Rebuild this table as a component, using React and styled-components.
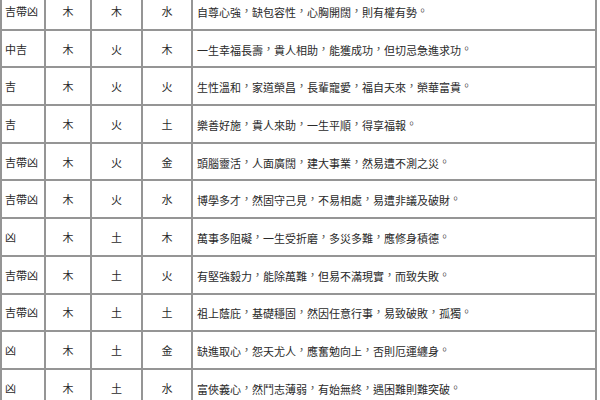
import React from 'react';
import styled, { createGlobalStyle } from 'styled-components';

const GlobalStyle = createGlobalStyle`
  html, body {
    margin: 0;
    padding: 0;
    background: #ffffff;
  }
  body {
    font-family: "Noto Sans CJK TC", "Noto Sans CJK SC", sans-serif;
  }
`;

const Frame = styled.div`
  width: 600px;
  height: 400px;
  overflow: hidden;
  background: #fff;
`;

const Table = styled.table`
  margin-top: -9px;
  margin-left: 0;
  width: 597px;
  border-collapse: collapse;
  table-layout: fixed;
  border: 2px solid #959595;
`;

const Row = styled.tr`
  height: 37.7px;
`;

const Cell = styled.td`
  border: 2px solid #959595;
  padding: 0 ${p => (p.$wide ? '4px' : '3px')};
  font-size: 11px;
  line-height: 14px;
  color: #2a2a2a;
  text-align: ${p => (p.$center ? 'center' : 'left')};
  vertical-align: middle;
  white-space: nowrap;
  overflow: hidden;
`;

// punctuation gets a full cell of its own, as in Taiwanese typesetting
const Punct = styled.span`
  display: inline-block;
  width: 11px;
  text-align: center;
  vertical-align: 2px;
  color: #555;
`;

const rows = [
  ['吉帶凶', '木', '木', '水', '自尊心強，缺包容性，心胸開闊，則有權有勢。'],
  ['中吉', '木', '火', '木', '一生幸福長壽，貴人相助，能獲成功，但切忌急進求功。'],
  ['吉', '木', '火', '火', '生性溫和，家道榮昌，長輩寵愛，福自天來，榮華富貴。'],
  ['吉', '木', '火', '土', '樂善好施，貴人來助，一生平順，得享福報。'],
  ['吉帶凶', '木', '火', '金', '頭腦靈活，人面廣闊，建大事業，然易遭不測之災。'],
  ['吉帶凶', '木', '火', '水', '博學多才，然固守己見，不易相處，易遭非議及破財。'],
  ['凶', '木', '土', '木', '萬事多阻礙，一生受折磨，多災多難，應修身積德。'],
  ['吉帶凶', '木', '土', '火', '有堅強毅力，能除萬難，但易不滿現實，而致失敗。'],
  ['吉帶凶', '木', '土', '土', '祖上蔭庇，基礎穩固，然因任意行事，易致破敗，孤獨。'],
  ['凶', '木', '土', '金', '缺進取心，怨天尤人，應奮勉向上，否則厄運纏身。'],
  ['凶', '木', '土', '水', '富俠義心，然鬥志薄弱，有始無終，遇困難則難突破。'],
];

const widths = [44, 46, 51, 50, null];

const Sentence = ({ text }) =>
  text.split(/([，。])/).filter(Boolean).map((part, i) =>
    part === '，' || part === '。'
      ? <Punct key={i}>{part}</Punct>
      : <React.Fragment key={i}>{part}</React.Fragment>
  );

export default function App() {
  return (
    <>
      <GlobalStyle />
      <Frame lang="zh-Hant-TW">
        <Table>
          <colgroup>
            {widths.map((w, i) => (
              <col key={i} style={w ? { width: w } : undefined} />
            ))}
          </colgroup>
          <tbody>
            {rows.map((r, i) => (
              <Row key={i}>
                <Cell>{r[0]}</Cell>
                <Cell $center>{r[1]}</Cell>
                <Cell $center>{r[2]}</Cell>
                <Cell $center>{r[3]}</Cell>
                <Cell $wide><Sentence text={r[4]} /></Cell>
              </Row>
            ))}
          </tbody>
        </Table>
      </Frame>
    </>
  );
}
